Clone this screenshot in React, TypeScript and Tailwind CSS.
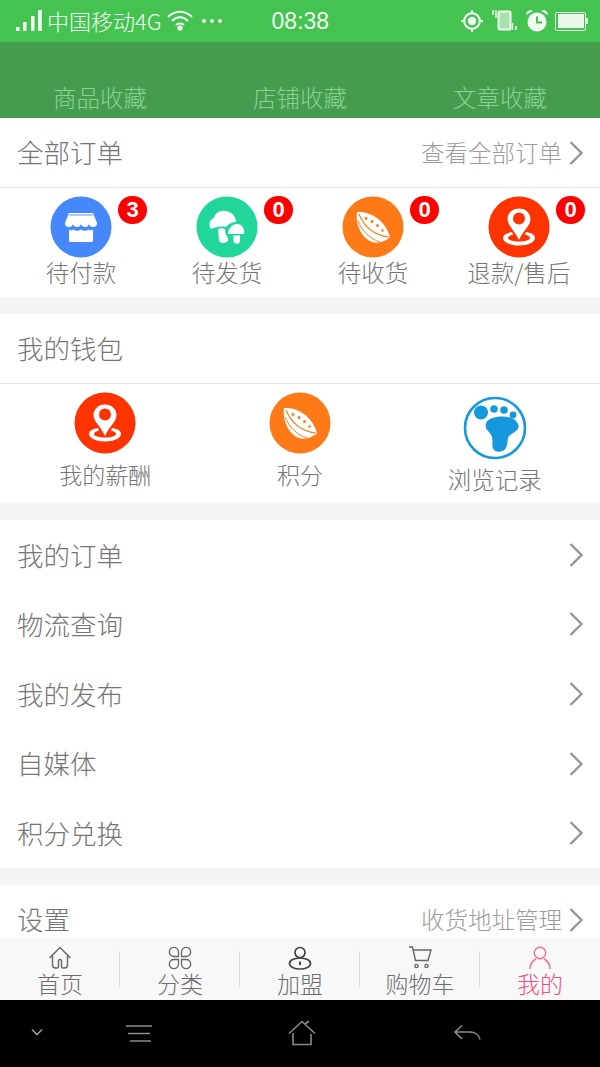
import React from "react";

const font = "font-['Noto_Sans_CJK_SC','Liberation_Sans',sans-serif]";

function Chevron() {
  return (
    <svg width="16" height="26" viewBox="0 0 16 26" className="shrink-0">
      <path d="M2.5 2 L13.5 13 L2.5 24" fill="none" stroke="#969696" strokeWidth="2.4" />
    </svg>
  );
}

function Shop() {
  return (
    <svg width="62" height="62" viewBox="0 0 62 62">
      <circle cx="31" cy="31" r="30.5" fill="#4488fb" />
      <path d="M19 17 H43 L47 27 H15 Z" fill="#fff" />
      <path d="M19 19 H43" stroke="#4488fb" strokeWidth="0.9" />
      <path d="M15 27 a4 4 0 0 0 8 0 a4 4 0 0 0 8 0 a4 4 0 0 0 8 0 a4 4 0 0 0 8 0 Z" fill="#fff" />
      <path d="M19 33.5 Q21 35 23.5 33.5 Q27 36 31 33.5 Q35 36 38.5 33.5 Q41 35 43 33.5 V44.5 a1.5 1.5 0 0 1 -1.5 1.5 H20.5 A1.5 1.5 0 0 1 19 44.5 Z" fill="#fff" />
    </svg>
  );
}

function Mushroom() {
  return (
    <svg width="62" height="62" viewBox="0 0 62 62">
      <circle cx="31" cy="31" r="30.5" fill="#21d69b" />
      <path d="M15 33 C12 29 14 23 18 22 C19 17 24 14 29 15 C35 15 40 20 40 26 C36 26 32 28 30 31 C25 30 19 31 15 33 Z" fill="#fff" />
      <path d="M22 33 C24 32 27 32 29 33 C29 37 30 40 32 42 L32 45 C30 47 26 48 24 46 C22 43 23 38 22 33 Z" fill="#fff" />
      <path d="M32 38 C32 33 36 28 41 28 C46 28 49 33 48 38 Z" fill="#fff" />
      <path d="M37.5 39.5 H44 V44.5 a3.2 3.2 0 0 1 -6.5 0 Z" fill="#fff" />
    </svg>
  );
}

function Pea() {
  return (
    <svg width="62" height="62" viewBox="0 0 62 62">
      <circle cx="31" cy="31" r="30.5" fill="#fe7a17" />
      <path d="M15 16 C27 15 43 23 48 41 C44 45 36 48 30 46 C21 43 13 30 15 16 Z" fill="#fff" />
      <path d="M17 18 C23 33 34 39.5 47 41" fill="none" stroke="#fe7a17" strokeWidth="1.1" />
      <path d="M16 25 C20 35 28 43 38 46" fill="none" stroke="#fe7a17" strokeWidth="1" />
      <g fill="#fe7a17">
        <circle cx="24" cy="22.5" r="1.4" />
        <circle cx="30" cy="25.5" r="1.5" />
        <circle cx="35.5" cy="29.5" r="1.5" />
        <circle cx="40.5" cy="34.5" r="1.3" />
      </g>
    </svg>
  );
}

function Pin() {
  return (
    <svg width="62" height="62" viewBox="0 0 62 62">
      <circle cx="31" cy="31" r="30.5" fill="#ff3300" />
      <path d="M31 12.5 C24 12.5 19.5 17.5 19.5 23 C19.5 29.5 27 35 31 44 C35 35 42.5 29.5 42.5 23 C42.5 17.5 38 12.5 31 12.5 Z" fill="#fff" />
      <circle cx="31" cy="22.5" r="6" fill="#ff3300" />
      <path d="M24 36 C18 37 15 39 15 42 C15 46 22 49.5 31 49.5 C40 49.5 47 46 47 42 C47 39 44 37 38 36 L37 38.5 C40 39.5 42 40.5 42 42 C42 44 37 45.5 31 45.5 C25 45.5 20 44 20 42 C20 40.5 22 39.5 25 38.5 Z" fill="#fff" />
    </svg>
  );
}

function Foot() {
  return (
    <svg width="64" height="64" viewBox="0 0 64 64">
      <circle cx="32" cy="32" r="30" fill="#fff" stroke="#1598dc" strokeWidth="2.6" />
      <g fill="#1598dc">
        <circle cx="18" cy="16.5" r="7" />
        <circle cx="31" cy="13" r="3.8" />
        <circle cx="41" cy="14" r="3.8" />
        <circle cx="50" cy="19" r="3.4" />
        <path d="M23 27 C25 22 33 20.5 40 20.5 C49 20.5 56 25 55.5 31 C55 35 49 37 46 40 C44 43 45 48 43 52 C41 56 34 57 31 54 C28.5 51 30 46 29 41 C28 37 24 35 23 32 C22.5 30 22.5 28.5 23 27 Z" />
      </g>
    </svg>
  );
}

function Badge({ n }: { n: number }) {
  return (
    <span className="absolute left-[68px] top-[8px] flex h-[28px] w-[29px] items-center justify-center rounded-full bg-[#ff0000] font-['Liberation_Sans',sans-serif] text-[22px] font-bold leading-none text-white">
      {n}
    </span>
  );
}

const orders = [
  { icon: <Shop />, label: "待付款", n: 3 },
  { icon: <Mushroom />, label: "待发货", n: 0 },
  { icon: <Pea />, label: "待收货", n: 0 },
  { icon: <Pin />, label: "退款/售后", n: 0 },
];

const menu = ["我的订单", "物流查询", "我的发布", "自媒体", "积分兑换"];

function StatusBar() {
  return (
    <div className="relative flex h-[42px] items-center bg-[#44c350] pl-[16px] text-white">
      <svg width="26" height="22" viewBox="0 0 26 22" className="shrink-0">
        <g fill="#f2fbf3">
          <rect x="0" y="17" width="3.5" height="4" />
          <rect x="7" y="12" width="3.5" height="9" />
          <rect x="15" y="6" width="3.5" height="15" />
          <rect x="22" y="0" width="3.8" height="21" />
        </g>
      </svg>
      <span className="ml-[5px] pb-[2px] text-[22px] font-light leading-none text-[#f0faf1]">中国移动4G</span>
      <svg width="26" height="22" viewBox="0 0 26 22" className="ml-[5px] shrink-0">
        <g fill="none" stroke="#f2fbf3" strokeWidth="2">
          <path d="M1 7 C8 0 18 0 25 7" />
          <path d="M5 11 C10 6 16 6 21 11" />
          <path d="M9 15 C11 13 15 13 17 15" />
        </g>
        <circle cx="13" cy="18" r="2.6" fill="#f2fbf3" />
      </svg>
      <div className="ml-[9px] flex gap-[4px]">
        <span className="h-[4px] w-[4px] rounded-full bg-[#f0faf1]" />
        <span className="h-[4px] w-[4px] rounded-full bg-[#f0faf1]" />
        <span className="h-[4px] w-[4px] rounded-full bg-[#f0faf1]" />
      </div>
      <span className="ml-[50px] font-['Liberation_Sans',sans-serif] text-[23px] leading-none text-[#f0faf1]">08:38</span>
      <div className="ml-auto mr-[12px] flex items-center">
        <svg width="22" height="22" viewBox="0 0 22 22">
          <circle cx="11" cy="11" r="7.8" fill="none" stroke="#f0faf1" strokeWidth="2.2" />
          <circle cx="11" cy="11" r="4.2" fill="#f0faf1" />
          <path d="M11 0 V3 M11 19 V22 M0 11 H3 M19 11 H22" stroke="#f0faf1" strokeWidth="2" />
        </svg>
        <svg width="26" height="24" viewBox="0 0 26 24" className="ml-[9px]">
          <rect x="6.5" y="2.5" width="12" height="18" rx="1" fill="#a8e2ad" stroke="#f0faf1" strokeWidth="2" />
          <path d="M1 1 V6 M4 1 V9 M20.5 14 V21 M24 17 V21" stroke="#f0faf1" strokeWidth="1.5" />
        </svg>
        <svg width="24" height="24" viewBox="0 0 24 24" className="ml-[7px]">
          <circle cx="12" cy="13" r="9.5" fill="#f0faf1" />
          <path d="M12 7.5 V13.5 H17" fill="none" stroke="#44c350" strokeWidth="2" />
          <path d="M1 6 C1 2 5 0 8 2 Z M23 6 C23 2 19 0 16 2 Z" fill="#f0faf1" />
        </svg>
        <div className="ml-[6px] flex items-center">
          <div className="flex h-[19px] w-[31px] items-stretch rounded-[2px] border border-[#f0faf1] bg-[#44c350] p-[1.5px]">
            <div className="flex-1 bg-[#e9f8ea]" />
          </div>
          <div className="h-[6px] w-[2px] bg-[#d5f1d8]" />
        </div>
      </div>
    </div>
  );
}

function SectionHead({ title, right }: { title: string; right?: string }) {
  return (
    <div className="flex h-[70px] items-center border-b border-[#e6e6e6] pl-[17px] pr-[16px]">
      <span className="text-[26.5px] font-light leading-none text-[#757575]">{title}</span>
      {right && (
        <div className="ml-auto flex items-center gap-[6px]">
          <span className="text-[23.5px] font-light leading-none text-[#9c9c9c]">{right}</span>
          <Chevron />
        </div>
      )}
    </div>
  );
}

function BottomTab({ icon, label, active, last }: { icon: React.ReactNode; label: string; active?: boolean; last?: boolean }) {
  return (
    <div className={`relative flex w-[120px] flex-col items-center pt-[7px] ${last ? "" : "after:absolute after:right-0 after:top-[13px] after:h-[36px] after:w-px after:bg-[#dcdcdc]"}`}>
      <div className="flex h-[25px] items-center justify-center">{icon}</div>
      <span className={`text-[23px] font-light leading-[26px] ${active ? "text-[#f04f82]" : "text-[#6e6e6e]"}`}>{label}</span>
    </div>
  );
}

export default function App() {
  return (
    <div className={`${font} relative flex h-[1067px] w-[600px] flex-col overflow-hidden bg-[#f5f5f5]`}>
      <StatusBar />
      <div className="flex h-[76px] items-end justify-around bg-[#469c4e] pb-[6px] text-[23.5px] font-light leading-[30px] text-[#86d48e]">
        <span>商品收藏</span>
        <span>店铺收藏</span>
        <span>文章收藏</span>
      </div>

      <div className="min-h-0 flex-1 overflow-hidden">
        <div className="bg-white">
          <SectionHead title="全部订单" right="查看全部订单" />
          <div className="flex h-[109px] pl-[8px]">
            {orders.map((o) => (
              <div key={o.label} className="relative flex w-[146px] flex-col items-center pt-[8px]">
                <div className="h-[62px]">{o.icon}</div>
                <span className="-mt-[1px] text-[23.5px] font-light leading-[30px] text-[#757575]">{o.label}</span>
                <div className="absolute left-[42px] top-0 h-0 w-0">
                  <Badge n={o.n} />
                </div>
              </div>
            ))}
          </div>
        </div>

        <div className="mt-[17px] bg-white">
          <SectionHead title="我的钱包" />
          <div className="grid h-[119px] grid-cols-3 px-[8px]">
            <div className="flex flex-col items-center pt-[8px]">
              <Pin />
              <span className="mt-[5px] text-[23px] font-light leading-[30px] text-[#757575]">我的薪酬</span>
            </div>
            <div className="flex flex-col items-center pt-[8px]">
              <Pea />
              <span className="mt-[5px] text-[23px] font-light leading-[30px] text-[#757575]">积分</span>
            </div>
            <div className="flex flex-col items-center pt-[12px]">
              <Foot />
              <span className="mt-[4px] text-[23.5px] font-light leading-[30px] text-[#757575]">浏览记录</span>
            </div>
          </div>
        </div>

        <div className="mt-[17px] bg-white">
          {menu.map((m) => (
            <div key={m} className="flex h-[69.6px] items-center pl-[17px] pr-[16px]">
              <span className="text-[26.5px] font-light leading-none text-[#757575]">{m}</span>
              <div className="ml-auto">
                <Chevron />
              </div>
            </div>
          ))}
        </div>

        <div className="mt-[17px] flex h-[70px] items-center bg-white pl-[17px] pr-[16px]">
          <span className="pb-[2px] text-[26.5px] font-light leading-none text-[#757575]">设置</span>
          <div className="ml-auto flex items-center gap-[6px]">
            <span className="text-[23.5px] font-light leading-none text-[#9c9c9c]">收货地址管理</span>
            <Chevron />
          </div>
        </div>
      </div>

      <div className="absolute bottom-[67px] left-0 flex h-[62px] w-full bg-[#f8f8f8]">
        <BottomTab
          label="首页"
          icon={
            <svg width="24" height="24" viewBox="0 0 24 24" fill="none" stroke="#666" strokeWidth="1.4">
              <path d="M1.5 12 L12 1.5 L22.5 12 M4.5 10 V19 a3 3 0 0 0 3 3 h1.5 a1.5 1.5 0 0 0 1.5 -1.5 V15 a1.5 1.5 0 0 1 3 0 v5.5 a1.5 1.5 0 0 0 1.5 1.5 h1.5 a3 3 0 0 0 3 -3 V10" />
            </svg>
          }
        />
        <BottomTab
          label="分类"
          icon={
            <svg width="24" height="24" viewBox="0 0 24 24" fill="none" stroke="#666" strokeWidth="1.3">
              <path d="M10.5 10.5 H6 a4.6 4.6 0 1 1 4.5 -4.6 Z" />
              <path d="M13.5 10.5 H18 a4.6 4.6 0 1 0 -4.5 -4.6 Z" />
              <path d="M10.5 13.5 H6 a4.6 4.6 0 1 0 4.5 4.6 Z" />
              <path d="M13.5 13.5 H18 a4.6 4.6 0 1 1 -4.5 4.6 Z" />
            </svg>
          }
        />
        <BottomTab
          label="加盟"
          icon={
            <svg width="24" height="24" viewBox="0 0 24 24" fill="none" stroke="#444" strokeWidth="1.7">
              <circle cx="12" cy="6.5" r="5" />
              <ellipse cx="12" cy="17.5" rx="10.5" ry="5.5" />
              <path d="M12 15.5 V19" strokeWidth="2" />
            </svg>
          }
        />
        <BottomTab
          label="购物车"
          icon={
            <svg width="24" height="24" viewBox="0 0 24 24" fill="none" stroke="#666" strokeWidth="1.4">
              <path d="M1 1 H4.5 L7.5 14.5 H20 L23 4 H5.5" />
              <circle cx="8.5" cy="20" r="1.6" />
              <circle cx="18.5" cy="20" r="1.6" />
            </svg>
          }
        />
        <BottomTab
          active
          last
          label="我的"
          icon={
            <svg width="24" height="24" viewBox="0 0 24 24" fill="none" stroke="#f0708f" strokeWidth="1.4">
              <circle cx="12" cy="7" r="5.7" />
              <path d="M2 23 C2 17 6 14 8 13 M22 23 C22 17 18 14 16 13" />
            </svg>
          }
        />
      </div>

      <div className="relative z-10 flex h-[67px] items-center bg-black">
        <svg width="14" height="10" viewBox="0 0 14 10" className="ml-[30px] -mt-[3px]">
          <path d="M2 2.5 L7 7.5 L12 2.5" fill="none" stroke="#999" strokeWidth="1.6" />
        </svg>
        <svg width="28" height="20" viewBox="0 0 28 20" className="ml-[81px]">
          <path d="M1 2 H27 M3 9.5 H25 M5 17 H26" stroke="#8a8a8a" strokeWidth="1.6" />
        </svg>
        <svg width="28" height="26" viewBox="0 0 28 26" className="ml-[135px] -mt-[2px]">
          <path d="M1 13.5 L14 1.5 L27 13.5 M5 13 V24.5 H23 V14 M17 4 L21 1" fill="none" stroke="#8a8a8a" strokeWidth="1.6" />
        </svg>
        <svg width="28" height="18" viewBox="0 0 28 18" className="ml-[137px] -mt-[2px]">
          <path d="M9 1.5 L2 8 L9 15 M2 8 H17 C22 8 26 11 27 15.5" fill="none" stroke="#8a8a8a" strokeWidth="1.6" />
        </svg>
      </div>
    </div>
  );
}
